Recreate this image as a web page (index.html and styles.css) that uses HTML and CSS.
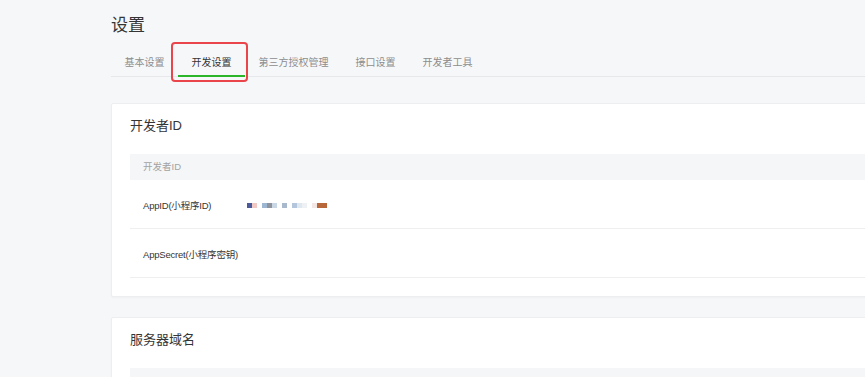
FILE: index.html
```html
<!DOCTYPE html>
<html lang="zh-CN">
<head>
  <meta charset="UTF-8">
  <title>设置</title>
  <link rel="stylesheet" href="styles.css">
</head>
<body>
  <div class="page">
    <h2 class="title">设置</h2>

    <div class="tabs">
      <a class="tab">基本设置</a>
      <a class="tab active">开发设置<span class="mark"></span></a>
      <a class="tab">第三方授权管理</a>
      <a class="tab">接口设置</a>
      <a class="tab">开发者工具</a>
    </div>

    <div class="card">
      <h3 class="card-title">开发者ID</h3>
      <div class="table">
        <div class="thead">开发者ID</div>
        <div class="row">
          <span class="label">AppID(小程序ID)</span>
          <span class="masked">
            <i class="b1"></i><i class="b2"></i>
            <i class="gap"></i><i class="b3"></i><i class="b4"></i><i class="b5"></i>
            <i class="gap"></i><i class="b6"></i>
            <i class="gap"></i><i class="b7"></i><i class="b8"></i><i class="b9"></i>
            <i class="gap"></i><i class="b10"></i><i class="b11 wide"></i>
          </span>
        </div>
        <div class="row">
          <span class="label">AppSecret(小程序密钥)</span>
        </div>
      </div>
    </div>

    <div class="card">
      <h3 class="card-title">服务器域名</h3>
      <div class="table">
        <div class="thead"></div>
      </div>
    </div>
  </div>
</body>
</html>
```

FILE: styles.css
```css
body {
  margin: 0;
  background: #f6f7f9;
  font-family: 'Liberation Sans', 'Noto Sans CJK SC', sans-serif;
  color: #353535;
  overflow: hidden;
}
.page {
  padding-left: 111px;
  width: 800px;
}
.title {
  margin: 0;
  padding-top: 15px;
  font-size: 17px;
  font-weight: normal;
  line-height: 22px;
}
.tabs {
  display: flex;
  margin-top: 15px;
  border-bottom: 1px solid #e7e8eb;
}
.tab {
  position: relative;
  padding: 1px 13.5px 2px;
  font-size: 10px;
  line-height: 20px;
  color: #8d8d8d;
  border-bottom: 2px solid transparent;
  margin-bottom: -1px;
}
.tab.active {
  color: #353535;
  border-bottom-color: #2bb52a;
}
.mark {
  position: absolute;
  top: -10px;
  left: -7px;
  right: -3px;
  bottom: -7px;
  border: 2px solid #e9454a;
  border-radius: 4px;
}
.card {
  margin-top: 26px;
  background: white;
  border: 1px solid #eceef0;
  border-radius: 2px;
  box-shadow: 0 1px 2px rgba(0,0,0,0.03);
  padding: 12px 0 18px 18px;
}
.card + .card {
  margin-top: 20px;
  padding-bottom: 30px;
}
.card-title {
  margin: 0 0 18px;
  font-size: 13px;
  font-weight: normal;
  line-height: 20px;
  color: #353535;
}
.thead {
  height: 26px;
  line-height: 26px;
  background: #f5f6f7;
  padding-left: 13px;
  font-size: 9.5px;
  color: #a3a3a3;
}
.row {
  display: flex;
  align-items: center;
  height: 46px;
  padding: 2px 0 0 13px;
  border-bottom: 1px solid #eeeff1;
  font-size: 9.5px;
  letter-spacing: -0.2px;
  color: #353535;
}
.label {
  width: 104px;
}
.masked {
  display: flex;
  height: 5px;
}
.masked i {
  display: block;
  width: 5px;
  height: 5px;
}
.masked i.gap { width: 5px; }
.masked i.wide { width: 10px; }
.b1 { background: #4b5a98; }
.b2 { background: #f0c9c4; }
.b3 { background: #9db6d1; }
.b4 { background: #8f939c; }
.b5 { background: #c9d6e4; }
.b6 { background: #a9b9cd; }
.b7 { background: #b3c6dc; }
.b8 { background: #dfe7ef; }
.b9 { background: #eef1f4; }
.b10 { background: #f3e7e6; }
.b11 { background: #b8673b; }
```
